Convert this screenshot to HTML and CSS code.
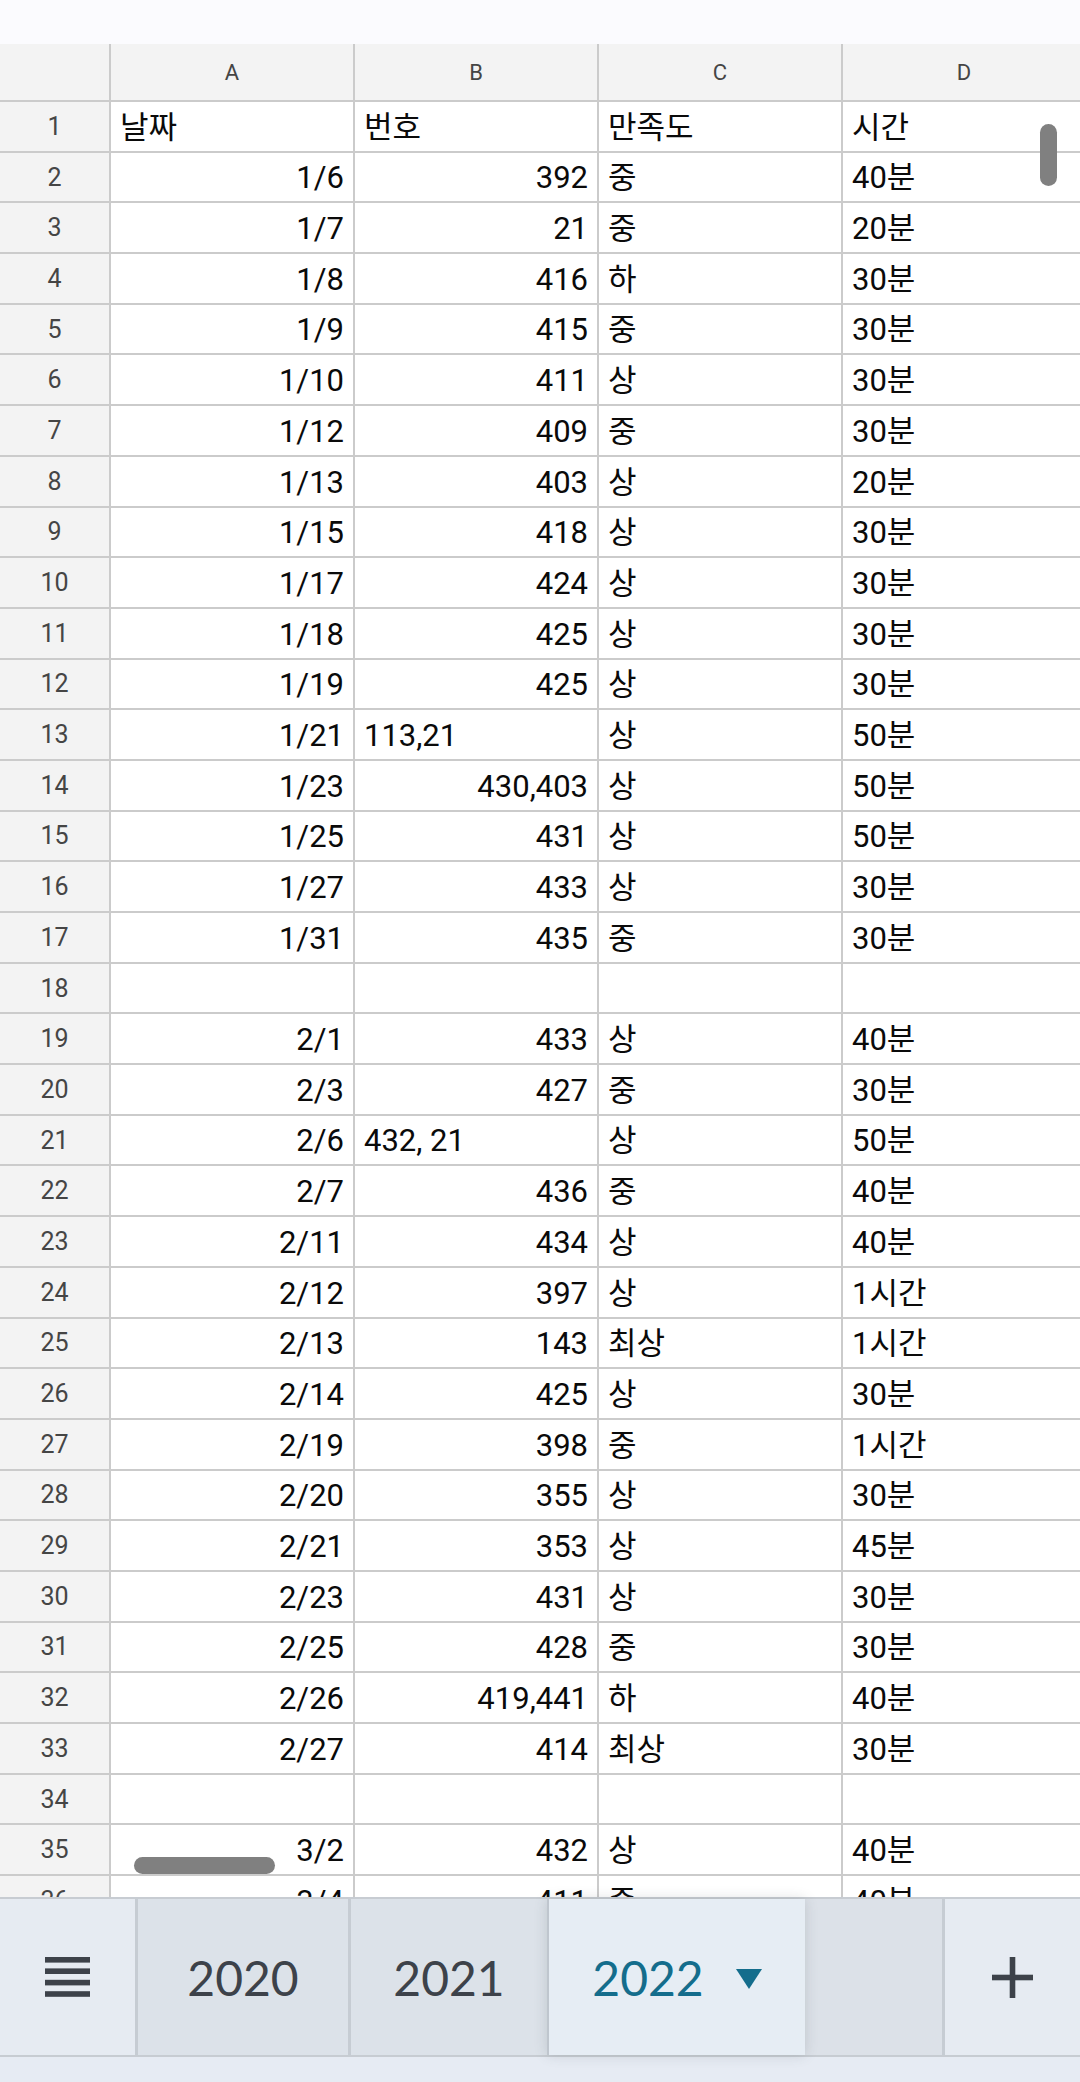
FILE: index.html
```html
<!DOCTYPE html>
<html lang="ko">
<head>
  <meta charset="UTF-8" />
  <meta name="viewport" content="width=device-width, initial-scale=1.0" />
  <title>시트</title>
  <link rel="stylesheet" href="styles.css">
</head>
<body>
  <div class="topbar"></div>

  <div class="sheet">
    <div class="grid">
      <div class="corner"></div><div class="hdr">A</div><div class="hdr">B</div><div class="hdr">C</div><div class="hdr">D</div>
      <div class="num">1</div><div class="cell">날짜</div><div class="cell">번호</div><div class="cell">만족도</div><div class="cell">시간</div>
      <div class="num">2</div><div class="cell r">1/6</div><div class="cell r">392</div><div class="cell">중</div><div class="cell">40분</div>
      <div class="num">3</div><div class="cell r">1/7</div><div class="cell r">21</div><div class="cell">중</div><div class="cell">20분</div>
      <div class="num">4</div><div class="cell r">1/8</div><div class="cell r">416</div><div class="cell">하</div><div class="cell">30분</div>
      <div class="num">5</div><div class="cell r">1/9</div><div class="cell r">415</div><div class="cell">중</div><div class="cell">30분</div>
      <div class="num">6</div><div class="cell r">1/10</div><div class="cell r">411</div><div class="cell">상</div><div class="cell">30분</div>
      <div class="num">7</div><div class="cell r">1/12</div><div class="cell r">409</div><div class="cell">중</div><div class="cell">30분</div>
      <div class="num">8</div><div class="cell r">1/13</div><div class="cell r">403</div><div class="cell">상</div><div class="cell">20분</div>
      <div class="num">9</div><div class="cell r">1/15</div><div class="cell r">418</div><div class="cell">상</div><div class="cell">30분</div>
      <div class="num">10</div><div class="cell r">1/17</div><div class="cell r">424</div><div class="cell">상</div><div class="cell">30분</div>
      <div class="num">11</div><div class="cell r">1/18</div><div class="cell r">425</div><div class="cell">상</div><div class="cell">30분</div>
      <div class="num">12</div><div class="cell r">1/19</div><div class="cell r">425</div><div class="cell">상</div><div class="cell">30분</div>
      <div class="num">13</div><div class="cell r">1/21</div><div class="cell">113,21</div><div class="cell">상</div><div class="cell">50분</div>
      <div class="num">14</div><div class="cell r">1/23</div><div class="cell r">430,403</div><div class="cell">상</div><div class="cell">50분</div>
      <div class="num">15</div><div class="cell r">1/25</div><div class="cell r">431</div><div class="cell">상</div><div class="cell">50분</div>
      <div class="num">16</div><div class="cell r">1/27</div><div class="cell r">433</div><div class="cell">상</div><div class="cell">30분</div>
      <div class="num">17</div><div class="cell r">1/31</div><div class="cell r">435</div><div class="cell">중</div><div class="cell">30분</div>
      <div class="num">18</div><div class="cell"></div><div class="cell"></div><div class="cell"></div><div class="cell"></div>
      <div class="num">19</div><div class="cell r">2/1</div><div class="cell r">433</div><div class="cell">상</div><div class="cell">40분</div>
      <div class="num">20</div><div class="cell r">2/3</div><div class="cell r">427</div><div class="cell">중</div><div class="cell">30분</div>
      <div class="num">21</div><div class="cell r">2/6</div><div class="cell">432, 21</div><div class="cell">상</div><div class="cell">50분</div>
      <div class="num">22</div><div class="cell r">2/7</div><div class="cell r">436</div><div class="cell">중</div><div class="cell">40분</div>
      <div class="num">23</div><div class="cell r">2/11</div><div class="cell r">434</div><div class="cell">상</div><div class="cell">40분</div>
      <div class="num">24</div><div class="cell r">2/12</div><div class="cell r">397</div><div class="cell">상</div><div class="cell">1시간</div>
      <div class="num">25</div><div class="cell r">2/13</div><div class="cell r">143</div><div class="cell">최상</div><div class="cell">1시간</div>
      <div class="num">26</div><div class="cell r">2/14</div><div class="cell r">425</div><div class="cell">상</div><div class="cell">30분</div>
      <div class="num">27</div><div class="cell r">2/19</div><div class="cell r">398</div><div class="cell">중</div><div class="cell">1시간</div>
      <div class="num">28</div><div class="cell r">2/20</div><div class="cell r">355</div><div class="cell">상</div><div class="cell">30분</div>
      <div class="num">29</div><div class="cell r">2/21</div><div class="cell r">353</div><div class="cell">상</div><div class="cell">45분</div>
      <div class="num">30</div><div class="cell r">2/23</div><div class="cell r">431</div><div class="cell">상</div><div class="cell">30분</div>
      <div class="num">31</div><div class="cell r">2/25</div><div class="cell r">428</div><div class="cell">중</div><div class="cell">30분</div>
      <div class="num">32</div><div class="cell r">2/26</div><div class="cell r">419,441</div><div class="cell">하</div><div class="cell">40분</div>
      <div class="num">33</div><div class="cell r">2/27</div><div class="cell r">414</div><div class="cell">최상</div><div class="cell">30분</div>
      <div class="num">34</div><div class="cell"></div><div class="cell"></div><div class="cell"></div><div class="cell"></div>
      <div class="num">35</div><div class="cell r">3/2</div><div class="cell r">432</div><div class="cell">상</div><div class="cell">40분</div>
      <div class="num">36</div><div class="cell r">3/4</div><div class="cell r">411</div><div class="cell">중</div><div class="cell">40분</div>
    </div>

    <!-- scroll thumbs -->
    <div class="thumb-v"></div>
    <div class="thumb-h"></div>
  </div>

  <div class="tabbar">
    <div class="tab tab-menu">
      <svg width="45" height="40" viewBox="0 0 45 40">
        <rect x="0" y="0" width="45" height="5.6" fill="#3d424a"/>
        <rect x="0" y="11.4" width="45" height="5.6" fill="#3d424a"/>
        <rect x="0" y="22.8" width="45" height="5.6" fill="#3d424a"/>
        <rect x="0" y="34.2" width="45" height="5.6" fill="#3d424a"/>
      </svg>
    </div>
    <div class="tab tab-2020">2020</div>
    <div class="tab tab-2021">2021</div>
    <div class="tab tab-active">
      <span>2022</span>
      <svg width="26" height="20" viewBox="0 0 26 20"><path d="M0 0 L26 0 L13 20 Z" fill="#146d8c"/></svg>
    </div>
    <div class="tab tab-empty"></div>
    <div class="tab tab-add">
      <svg width="41" height="41" viewBox="0 0 41 41">
        <rect x="17.7" y="0" width="5.6" height="41" fill="#3d424a"/>
        <rect x="0" y="17.7" width="41" height="5.6" fill="#3d424a"/>
      </svg>
    </div>
  </div>
  <div class="bottom-strip"></div>
</body>
</html>
```

FILE: styles.css
```css
body {
  margin: 0;
  width: 1080px;
  height: 2082px;
  overflow: hidden;
  background: #fbfbfe;
  font-family: Roboto, "Noto Sans CJK KR", sans-serif;
}
.topbar {
  height: 44px;
  background: #fbfbfe;
}
.sheet {
  position: relative;
  height: 1853px;
  overflow: hidden;
  background: #ffffff;
}
.grid {
  display: grid;
  grid-template-columns: 109px 242px 242px 242px 242px;
  grid-template-rows: 56px;
  grid-auto-rows: 48.69px;
  gap: 2px;
  width: max-content;
  background: #cbcbcb;
}
.corner, .hdr, .num {
  background: #f3f3f3;
  color: #454545;
  display: flex;
  align-items: center;
  justify-content: center;
}
.hdr {
  font-size: 22px;
}
.num {
  font-size: 25px;
}
.cell {
  background: #ffffff;
  color: #0a0a0a;
  font-size: 31px;
  line-height: 36px;
  display: flex;
  align-items: flex-end;
  padding: 0 9px 5px 9px;
  white-space: nowrap;
  overflow: hidden;
}
.cell.r {
  justify-content: flex-end;
}
.thumb-v {
  position: absolute;
  top: 80px;
  left: 1040px;
  width: 17px;
  height: 62px;
  border-radius: 9px;
  background: #808080;
}
.thumb-h {
  position: absolute;
  top: 1813px;
  left: 134px;
  width: 141px;
  height: 17px;
  border-radius: 9px;
  background: #808080;
}
.tabbar {
  display: flex;
  height: 156px;
  border-top: 2px solid #c7ccd2;
  border-bottom: 2px solid #c7ccd2;
  background: #dce2e9;
}
.tab {
  display: flex;
  align-items: center;
  justify-content: center;
  font-family: Lato, "Open Sans", sans-serif;
  font-size: 48px;
  color: #3d424a;
  border-left: 3px solid #c6ccd3;
  box-sizing: border-box;
}
.tab-menu {
  width: 135px;
  border-left: none;
  background: #e6ebf2;
}
.tab-2020 {
  width: 213px;
  background: #dce2e9;
}
.tab-2021 {
  width: 199px;
  background: #dce2e9;
}
.tab-active {
  width: 258px;
  gap: 32px;
  color: #146d8c;
  background: #e6edf4;
  border-left: 2px solid #bfc6ce;
  position: relative;
  z-index: 1;
  box-shadow: 0 0 12px rgba(60, 70, 80, 0.18);
}
.tab-active svg {
  margin-top: 4px;
}
.tab-empty {
  width: 137px;
  border-left: none;
  background: #dce1e8;
}
.tab-add {
  flex: 1;
  background: #e6ebf2;
}
.bottom-strip {
  height: 26px;
  background: #e6ebf3;
}
```
